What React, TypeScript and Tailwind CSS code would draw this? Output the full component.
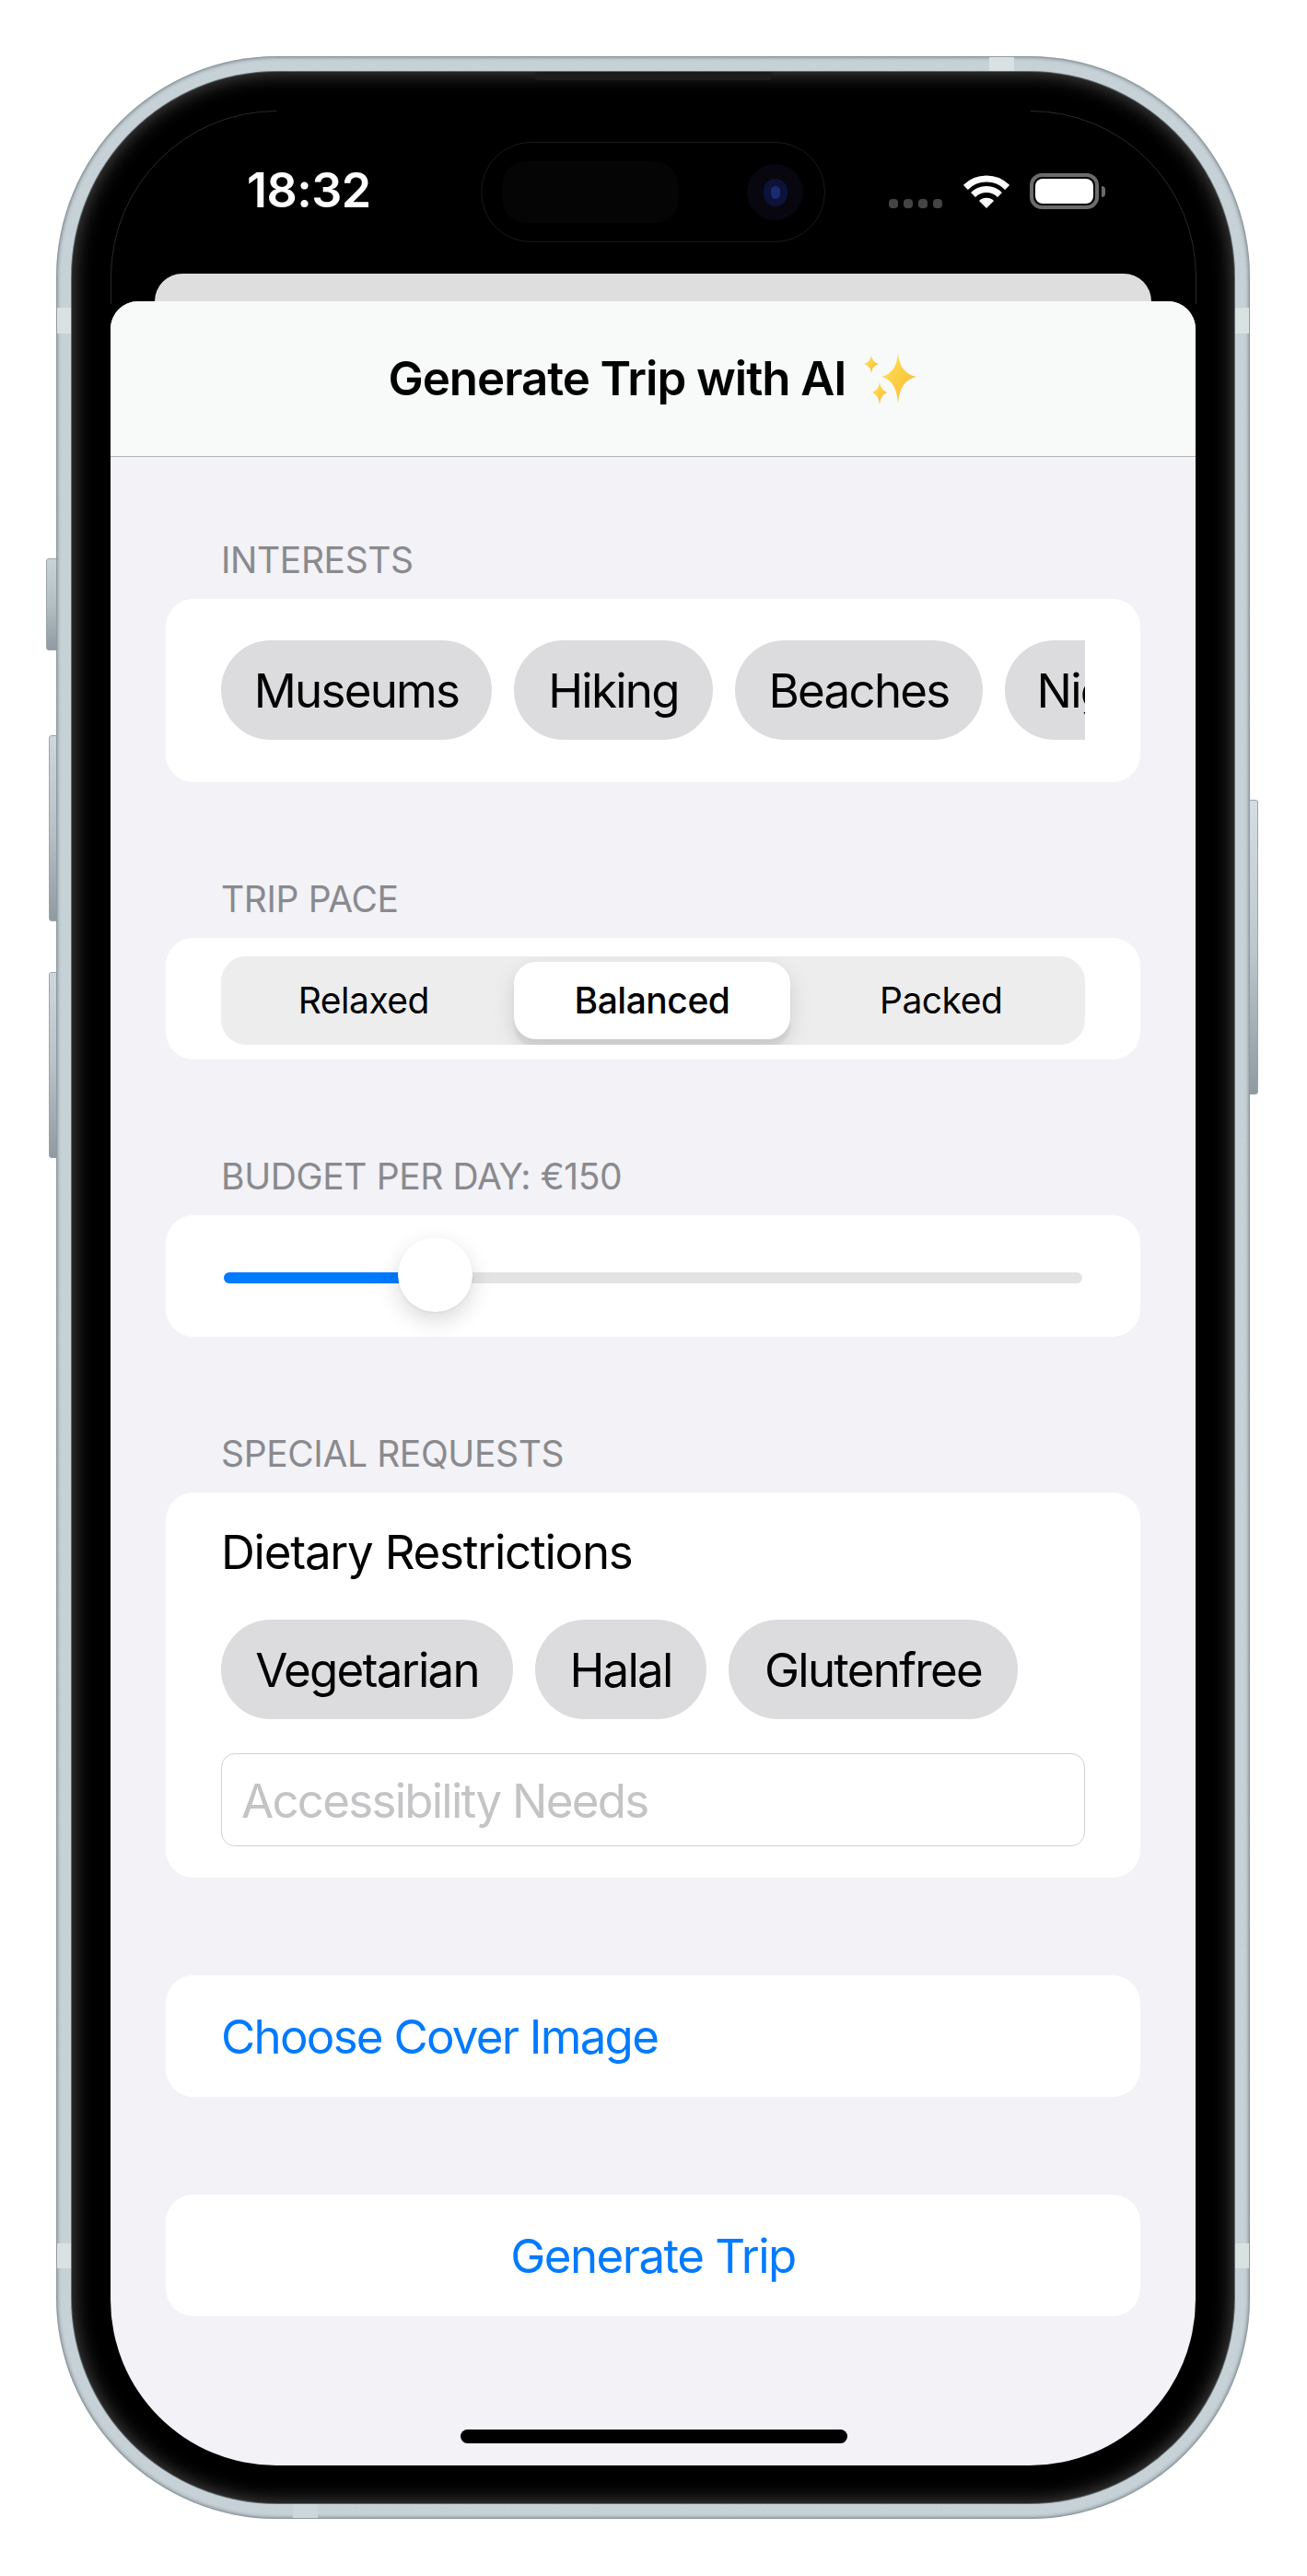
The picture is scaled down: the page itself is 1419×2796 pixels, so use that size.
const interests = [
  { label: "Museums", width: "w-[294px]" },
  { label: "Hiking", width: "w-[216px]" },
  { label: "Beaches", width: "w-[269px]" },
  { label: "Nightlife", width: "w-[254px]" },
];

const dietary = [
  { label: "Vegetarian", width: "w-[317px]" },
  { label: "Halal", width: "w-[186px]" },
  { label: "Glutenfree", width: "w-[314px]" },
];

function Chip({ label, width }: { label: string; width: string }) {
  return (
    <span
      className={`flex h-[108px] shrink-0 items-center justify-center rounded-[54px] bg-[#dcdcde] pt-[3px] text-[51px] tracking-[-0.034em] text-black ${width}`}
    >
      {label}
    </span>
  );
}

function SectionLabel({ children }: { children: string }) {
  return (
    <p className="mb-[18px] h-[48px] pl-[60px] text-[39px] leading-[48px] tracking-[-0.01em] text-[#8a8a8e]">
      {children}
    </p>
  );
}

function Sparkles() {
  return (
    <svg width="58" height="56" viewBox="0 0 58 56" aria-hidden className="shrink-0">
      <defs>
        <linearGradient id="spark" x1="0" y1="0" x2="1" y2="1">
          <stop offset="0" stopColor="#ffe45c" />
          <stop offset="1" stopColor="#f9b72c" />
        </linearGradient>
      </defs>
      <path d="M37 0 Q38.5 22 57 26 Q38.5 30 37 55 Q35.5 30 19 26 Q35.5 22 37 0Z" fill="url(#spark)" />
      <path d="M8 3 Q9 10 16 12 Q9 14 8 22 Q7 14 0 12 Q7 10 8 3Z" fill="url(#spark)" />
      <path d="M17 32 Q18 40 25 43 Q18 46 17 56 Q16 46 9 43 Q16 40 17 32Z" fill="url(#spark)" />
    </svg>
  );
}

function WifiGlyph() {
  return (
    <svg width="50" height="37" viewBox="0 0 50 37" fill="none" aria-hidden>
      <path d="M2.4 14.4 A32 32 0 0 1 47.6 14.4" stroke="#fff" strokeWidth="7" />
      <path d="M10.5 22.5 A20.5 20.5 0 0 1 39.5 22.5" stroke="#fff" strokeWidth="7" />
      <path d="M25 37 L17 29 A11.3 11.3 0 0 1 33 29 Z" fill="#fff" />
    </svg>
  );
}

function StatusBar() {
  return (
    <div className="flex h-[177px] shrink-0 items-end pb-[70px] pl-[148px] pr-[98px] text-white">
      <span className="relative top-[5px] text-[52px] font-semibold leading-[50px] tracking-[-0.01em]">18:32</span>
      <div className="ml-auto flex items-end">
        <div className="mb-[1px] flex gap-[6px]">
          <span className="h-[10px] w-[10px] rounded-[4px] bg-[#444]" />
          <span className="h-[10px] w-[10px] rounded-[4px] bg-[#444]" />
          <span className="h-[10px] w-[10px] rounded-[4px] bg-[#444]" />
          <span className="h-[10px] w-[10px] rounded-[4px] bg-[#444]" />
        </div>
        <div className="ml-[23px] mb-[1px]">
          <WifiGlyph />
        </div>
        <div className="ml-[22px] flex items-center">
          <div className="h-[39px] w-[75px] rounded-[13px] border-[4px] border-[#6b6b6b] p-[2px]">
            <div className="h-full w-full rounded-[8px] bg-white" />
          </div>
          <span className="ml-[3px] h-[12px] w-[4px] rounded-r-[4px] bg-[#6b6b6b]" />
        </div>
      </div>
    </div>
  );
}

function DynamicIsland() {
  return (
    <div className="absolute left-[444px] top-[76px] h-[109px] w-[374px] rounded-[55px] border border-[#1a1a1a] bg-black">
      <div className="absolute left-[22px] top-[20px] h-[67px] w-[192px] rounded-[26px] bg-[#050505]" />
      <div className="absolute left-[288px] top-[23px] flex h-[61px] w-[61px] items-center justify-center rounded-full bg-[#08060e]">
        <div className="flex h-[30px] w-[26px] items-center justify-center rounded-full bg-[#0c1238]">
          <div className="h-[14px] w-[10px] rounded-full bg-[#1c2a70]" />
        </div>
      </div>
    </div>
  );
}

function PaceControl() {
  return (
    <div className="grid h-[96px] grid-cols-3 overflow-hidden rounded-[27px] bg-[#ededed] text-[39px] tracking-[-0.012em] text-black">
      <span className="flex items-center justify-center pr-[3px]">Relaxed</span>
      <span className="my-[6px] ml-[5px] mr-[7px] flex items-center justify-center rounded-[24px] bg-white font-[550] shadow-[0_9px_3px_rgba(0,0,0,0.06),0_9px_24px_rgba(0,0,0,0.12)]">
        Balanced
      </span>
      <span className="flex items-center justify-center">Packed</span>
    </div>
  );
}

function BudgetSlider() {
  return (
    <div className="relative h-[12px] rounded-full bg-[#e3e3e5]">
      <div className="h-full w-[200px] rounded-l-full bg-[#007aff]" />
      <div className="absolute left-[189px] top-[-38px] h-[81px] w-[81px] rounded-full bg-white shadow-[0_9px_24px_rgba(0,0,0,0.15),0_1px_3px_rgba(0,0,0,0.06)]" />
    </div>
  );
}

function SheetForm() {
  return (
    <div className="relative flex min-h-0 flex-1 flex-col rounded-t-[30px] bg-[#f2f2f7]">
      <header className="flex h-[169px] shrink-0 items-center justify-center gap-[20px] rounded-t-[30px] border-b border-[#b3b3b3] bg-[#f8f9f9] text-[51px] font-semibold tracking-[-0.02em] text-black">
        <span>Generate Trip with AI</span>
        <Sparkles />
      </header>

      <div className="flex flex-col px-[60px] pt-[88px]">
        <section>
          <SectionLabel>INTERESTS</SectionLabel>
          <div className="rounded-[30px] bg-white px-[60px] pb-[46px] pt-[45px]">
            <div className="flex gap-[24px] overflow-hidden">
              {interests.map((c) => (
                <Chip key={c.label} label={c.label} width={c.width} />
              ))}
            </div>
          </div>
        </section>

        <section className="mt-[103px]">
          <SectionLabel>TRIP PACE</SectionLabel>
          <div className="rounded-[30px] bg-white px-[60px] pb-[16px] pt-[20px]">
            <PaceControl />
          </div>
        </section>

        <section className="mt-[103px]">
          <SectionLabel>BUDGET PER DAY: €150</SectionLabel>
          <div className="h-[132px] rounded-[30px] bg-white pl-[63px] pr-[63px] pt-[62px]">
            <BudgetSlider />
          </div>
        </section>

        <section className="mt-[103px]">
          <SectionLabel>SPECIAL REQUESTS</SectionLabel>
          <div className="rounded-[30px] bg-white px-[60px] pb-[34px] pt-[35px]">
            <p className="h-[60px] text-[51px] leading-[60px] tracking-[-0.024em] text-black">
              Dietary Restrictions
            </p>
            <div className="mt-[43px] flex gap-[24px]">
              {dietary.map((c) => (
                <Chip key={c.label} label={c.label} width={c.width} />
              ))}
            </div>
            <div className="mt-[37px] flex h-[101px] items-center rounded-[15px] border border-[#d1d1d6] pl-[21px] pt-[4px] text-[51px] tracking-[-0.034em] text-[#c4c4c7]">
              Accessibility Needs
            </div>
          </div>
        </section>

        <button
          type="button"
          className="mt-[106px] h-[132px] rounded-[30px] bg-white pl-[60px] pt-[3px] text-left text-[51px] tracking-[-0.034em] text-[#007aff]"
        >
          Choose Cover Image
        </button>
        <button
          type="button"
          className="mt-[106px] h-[132px] rounded-[30px] bg-white pt-[3px] text-center text-[51px] tracking-[-0.03em] text-[#007aff]"
        >
          Generate Trip
        </button>
      </div>

      <div className="absolute bottom-[24px] left-[380px] h-[15px] w-[420px] rounded-full bg-black" />
    </div>
  );
}

export default function App() {
  return (
    <div className="h-[2796px] overflow-hidden bg-white pl-[61px] pt-[61px] font-['Inter',sans-serif]">
      <div className="relative h-[2673px] w-[1296px]">
        {/* side buttons */}
        <div className="absolute left-[-11px] top-[545px] h-[100px] w-[12px] rounded-l-[3px] border border-[#9aa5aa] bg-gradient-to-b from-[#c9d3d8] via-[#b4bfc4] to-[#8f9ba1]" />
        <div className="absolute left-[-8px] top-[737px] h-[202px] w-[9px] rounded-l-[3px] border border-[#9aa5aa] bg-gradient-to-b from-[#cdd7dc] via-[#b8c3c8] to-[#8f9ba1]" />
        <div className="absolute left-[-8px] top-[994px] h-[202px] w-[9px] rounded-l-[3px] border border-[#9aa5aa] bg-gradient-to-b from-[#cdd7dc] via-[#b8c3c8] to-[#8f9ba1]" />
        <div className="absolute right-[-9px] top-[807px] h-[320px] w-[10px] rounded-r-[3px] border border-[#9aa5aa] bg-gradient-to-b from-[#d4dde1] via-[#bdc8cd] to-[#8f9ba1]" />

        <div className="relative h-full w-full overflow-hidden rounded-[240px] bg-[#c9d4d9] p-[17px] shadow-[inset_0_0_5px_rgba(55,68,75,0.95)]">
          {/* brushed metal grain */}
          <svg className="absolute inset-0 h-full w-full opacity-[0.16]" aria-hidden>
            <filter id="grain">
              <feTurbulence type="fractalNoise" baseFrequency="0.9" numOctaves="2" />
              <feColorMatrix values="0 0 0 0 0.35 0 0 0 0 0.4 0 0 0 0 0.43 0 0 0 1.6 -0.5" />
            </filter>
            <rect width="100%" height="100%" filter="url(#grain)" />
          </svg>

          {/* antenna bands */}
          <div className="absolute left-[1px] top-[273px] h-[28px] w-[16px] bg-[#d9e1e3]" />
          <div className="absolute right-[1px] top-[273px] h-[28px] w-[16px] bg-[#d9e1e3]" />
          <div className="absolute left-[1px] top-[2374px] h-[27px] w-[16px] bg-[#d9e1e3]" />
          <div className="absolute right-[1px] top-[2374px] h-[27px] w-[16px] bg-[#d9e1e3]" />
          <div className="absolute bottom-[1px] left-[257px] h-[16px] w-[27px] bg-[#cdd6d8]" />
          <div className="absolute right-[256px] top-[1px] h-[16px] w-[27px] bg-[#d9e1e3]" />

          <div className="relative h-full w-full rounded-[223px] bg-black pb-[41px] pl-[42px] pr-[42px] pt-[42px] shadow-[inset_0_0_22px_rgba(255,255,255,0.32),0_0_0_1px_rgba(70,80,85,0.8)]">
            <div className="absolute left-[503px] top-0 h-[9px] w-[257px] rounded-b-[4px] bg-[#1c1c1c]" />
            <svg
              className="absolute left-[42px] top-[42px]"
              width="1179"
              height="210"
              fill="none"
              stroke="#2a2a2a"
              aria-hidden
            >
              <path d="M0.5 210 V180 A180 180 0 0 1 180 0.5" />
              <path d="M1178.5 210 V180 A180 180 0 0 0 999 0.5" />
            </svg>
            <DynamicIsland />
            <div className="relative flex h-full flex-col overflow-hidden rounded-[180px] text-black">
              <StatusBar />
              <div className="mx-[48px] h-[30px] shrink-0 rounded-t-[30px] bg-[#dedede]" />
              <SheetForm />
            </div>
          </div>
        </div>
      </div>
    </div>
  );
}
